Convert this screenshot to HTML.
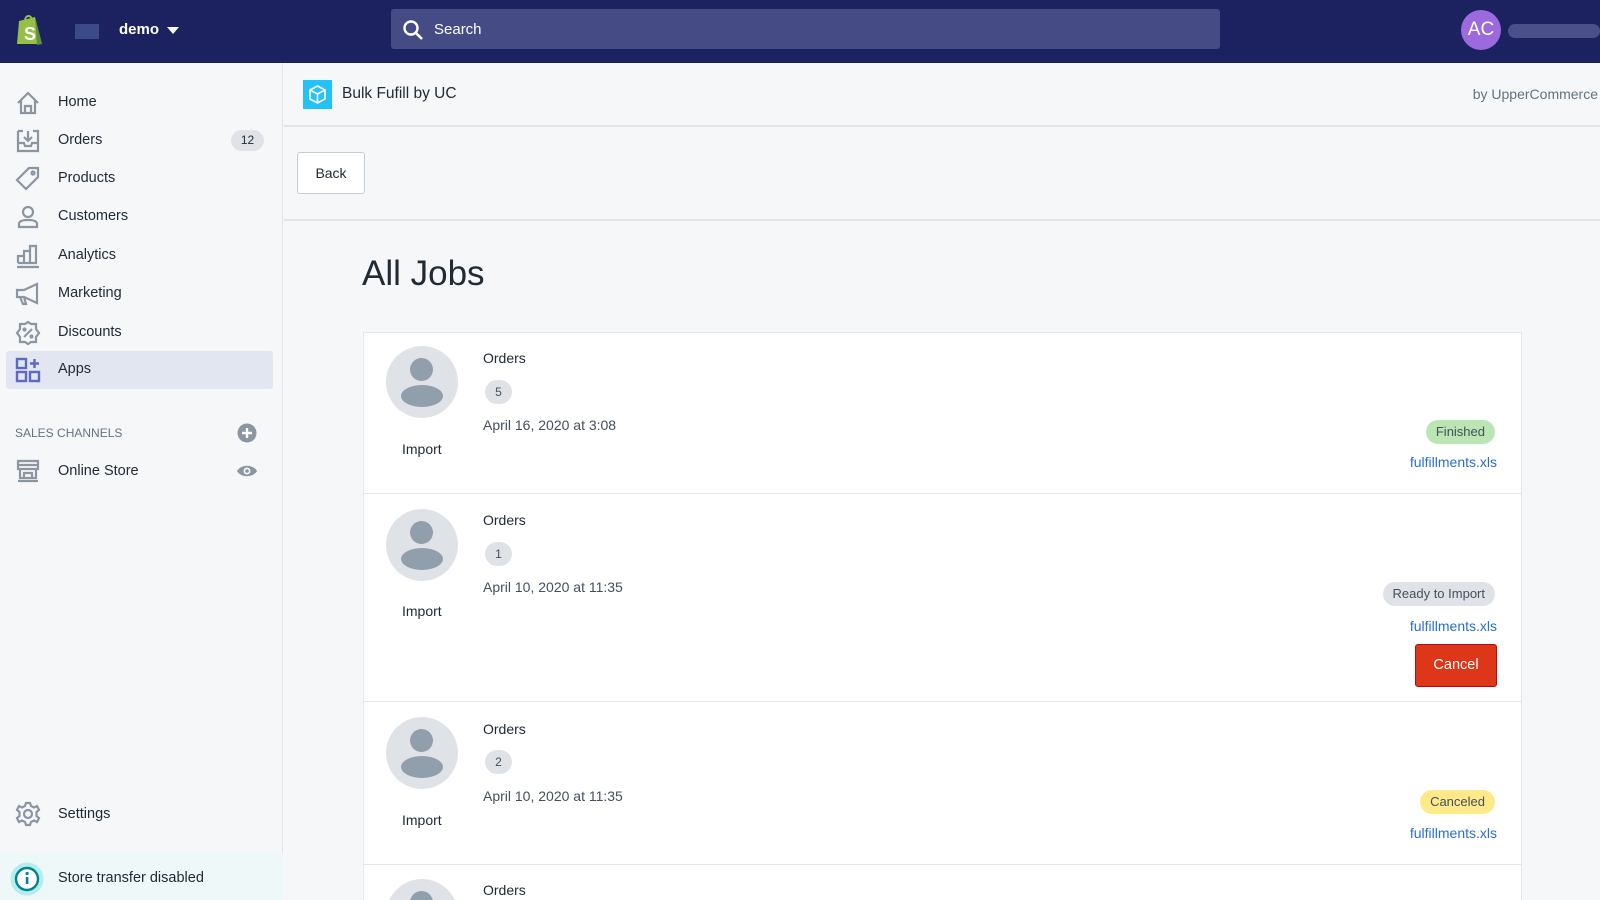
<!DOCTYPE html>
<html style="width:1600px;height:900px;overflow:hidden"><head><meta charset="utf-8"><style>
*{box-sizing:border-box;margin:0;padding:0}
body{width:1600px;height:900px;overflow:hidden;background:#f6f7f9;font-family:"Liberation Sans",sans-serif;color:#212b36;position:relative;font-size:14px}
.top{position:absolute;left:0;top:0;width:1600px;height:63px;background:#1c2260}
.abs{position:absolute}
.side{position:absolute;left:0;top:63px;width:283px;height:837px;background:#f6f7f9;border-right:1px solid #dfe3e8}
.nav{position:absolute;left:58px;font-size:14.5px;color:#212b36;transform:translateY(-50%)}
.card{position:absolute;left:363px;width:1159px;background:#fff;border:1px solid #e3e6ea;border-top:none}
.av{position:absolute;left:386px;width:72px;height:72px;border-radius:50%;background:#dfe3e8;overflow:hidden}
.t{position:absolute;transform:translateY(-50%);white-space:nowrap}
.badge{position:absolute;width:27px;height:24px;border-radius:12px;background:#dfe3e8;font-size:12px;text-align:center;line-height:24px;transform:translateY(-50%);color:#454f5b}
.pill{position:absolute;right:105px;height:24px;border-radius:12px;padding:0 10px;font-size:13px;line-height:24px;transform:translateY(-50%);color:#454f5b}
.link{position:absolute;right:103px;color:#2c6ecb;font-size:14px;transform:translateY(-50%)}
</style></head><body>
<div class="top">
  <svg class="abs" style="left:15px;top:13px" width="30" height="34" viewBox="0 0 30 34"><path d="M4 8 L20 4 L27 31 L2 31 Z" fill="#95bf47"/><path d="M20 4 L27 31 L22 32 Z" fill="#5e8e3e"/><path d="M10 8 C10 2 16 1 17 7" stroke="#95bf47" stroke-width="2" fill="none"/><text x="9" y="27" font-family="Liberation Sans" font-weight="bold" font-size="18" fill="#fff">S</text></svg>
  <div class="abs" style="left:75px;top:24px;width:24px;height:15px;background:#3d4a8a"></div>
  <div class="abs" style="left:119px;top:21px;color:#fff;font-weight:bold;font-size:15px">demo</div>
  <svg class="abs" style="left:167px;top:27px" width="12" height="8"><path d="M0 0H12L6 7Z" fill="#fff"/></svg>
  <div class="abs" style="left:391px;top:9px;width:829px;height:40px;background:#444b85;border-radius:3px"></div>
  <svg class="abs" style="left:402px;top:19px" width="22" height="22" viewBox="0 0 22 22"><circle cx="9" cy="9" r="6.5" stroke="#fff" stroke-width="2.4" fill="none"/><path d="M14 14L20 20" stroke="#fff" stroke-width="2.6"/></svg>
  <div class="abs" style="left:434px;top:21px;color:#fff;font-size:15px">Search</div>
  <div class="abs" style="left:1461px;top:10px;width:40px;height:40px;border-radius:50%;background:#9c6ade;color:#fff;font-size:19px;text-align:center;line-height:40px">AC</div>
  <div class="abs" style="left:1508px;top:24px;width:92px;height:14px;border-radius:7px;background:#4a5089"></div>
</div>
<div class="side">
  <div class="abs" style="left:6px;top:288px;width:267px;height:38px;background:#e2e6f1;border-radius:3px"></div>
  <div class="abs" style="left:0;top:790px;width:283px;height:47px;background:#eef8f8"></div>
</div>
<svg class="abs" style="left:15px;top:90px" width="26" height="26" viewBox="0 0 26 26" fill="none" stroke="#8c96a3" stroke-width="2.2"><path d="M3 13L13 3L23 13M6 10V23H20V10M10 23V16H16V23"/></svg>
<svg class="abs" style="left:15px;top:128px" width="26" height="26" viewBox="0 0 26 26" fill="none" stroke="#8c96a3" stroke-width="2.2"><path d="M3 3H8M18 3H23V23H3V3M3 15H9L10 18H16L17 15H23M13 3V12M9 9L13 13L17 9"/></svg>
<svg class="abs" style="left:15px;top:166px" width="26" height="26" viewBox="0 0 26 26" fill="none" stroke="#8c96a3" stroke-width="2.2"><path d="M14 2H23V11L11 23L2 14Z"/><circle cx="18" cy="7" r="1.5"/></svg>
<svg class="abs" style="left:15px;top:204px" width="26" height="26" viewBox="0 0 26 26" fill="none" stroke="#8c96a3" stroke-width="2.2"><circle cx="13" cy="8" r="5"/><path d="M4 23V20C4 17 8 16 13 16S22 17 22 20V23Z"/></svg>
<svg class="abs" style="left:15px;top:243px" width="26" height="26" viewBox="0 0 26 26" fill="none" stroke="#8c96a3" stroke-width="2.2"><path d="M2 24H24M3 20V13H9V20M9 20V8H15V20M15 20V3H21V20H3"/></svg>
<svg class="abs" style="left:15px;top:281px" width="26" height="26" viewBox="0 0 26 26" fill="none" stroke="#8c96a3" stroke-width="2.2"><path d="M2 9H9L22 3V22L9 16H2ZM5 16L8 23H11L9 16"/></svg>
<svg class="abs" style="left:15px;top:320px" width="26" height="26" viewBox="0 0 26 26" fill="none" stroke="#8c96a3" stroke-width="2.2"><path d="M13 2L16 4H21V9L24 13L21 17V22H16L13 24L10 22H5V17L2 13L5 9V4H10Z"/><path d="M9 17L17 9" /><circle cx="9.5" cy="9.5" r="1"/><circle cx="16.5" cy="16.5" r="1"/></svg>
<svg class="abs" style="left:15px;top:357px" width="26" height="26" viewBox="0 0 26 26" fill="none" stroke="#5c6ac4" stroke-width="2.4"><rect x="2" y="2" width="9" height="9"/><rect x="2" y="15" width="9" height="9"/><rect x="15" y="15" width="9" height="9"/><path d="M19.5 2V11M15 6.5H24"/></svg>
<div class="nav" style="top:102px">Home</div>
<div class="nav" style="top:140px">Orders</div>
<div class="abs" style="left:231px;top:130px;width:33px;height:21px;border-radius:11px;background:#dfe3e8;font-size:12px;text-align:center;line-height:21px">12</div>
<div class="nav" style="top:178px">Products</div>
<div class="nav" style="top:216px">Customers</div>
<div class="nav" style="top:255px">Analytics</div>
<div class="nav" style="top:293px">Marketing</div>
<div class="nav" style="top:332px">Discounts</div>
<div class="nav" style="top:369px">Apps</div>
<div class="abs" style="left:15px;top:426px;font-size:12px;color:#637381">SALES CHANNELS</div>
<svg class="abs" style="left:237px;top:423px" width="20" height="20" viewBox="0 0 20 20"><circle cx="10" cy="10" r="9.5" fill="#8c96a3"/><path d="M10 5V15M5 10H15" stroke="#fff" stroke-width="2.4"/></svg>
<svg class="abs" style="left:15px;top:458px" width="26" height="26" viewBox="0 0 26 26" fill="none" stroke="#8c96a3" stroke-width="2.2"><path d="M3 3H23V11H3ZM5 11V20H21V11M9 20V15H17V20M3 23H23M3 7H23"/></svg>
<div class="nav" style="top:471px">Online Store</div>
<svg class="abs" style="left:236px;top:464px" width="22" height="14" viewBox="0 0 22 14"><path d="M1 7C5 0 17 0 21 7C17 14 5 14 1 7Z" fill="#8c96a3"/><circle cx="11" cy="7" r="3.5" fill="#f6f7f9"/><circle cx="11" cy="7" r="1.8" fill="#8c96a3"/></svg>
<svg class="abs" style="left:15px;top:801px" width="26" height="26" viewBox="0 0 26 26" fill="none" stroke="#8c96a3" stroke-width="2.2"><circle cx="13" cy="13" r="4"/><path d="M11 2H15L16 5L19 6.5L22 5L24 9L21.5 11V15L24 17L22 21L19 19.5L16 21L15 24H11L10 21L7 19.5L4 21L2 17L4.5 15V11L2 9L4 5L7 6.5L10 5Z"/></svg>
<div class="nav" style="top:814px">Settings</div>
<svg class="abs" style="left:10px;top:862px" width="34" height="34" viewBox="0 0 34 34"><circle cx="17" cy="17" r="16.5" fill="#b7ecec"/><circle cx="17" cy="17" r="11" fill="#fff" stroke="#00848e" stroke-width="2.4"/><rect x="15.8" y="15" width="2.6" height="7" fill="#00848e"/><circle cx="17.1" cy="11.5" r="1.6" fill="#00848e"/></svg>
<div class="abs" style="left:58px;top:870px;font-size:14.5px;line-height:17px;height:17px">Store transfer disabled</div>

<div class="abs" style="left:284px;top:63px;width:1316px;height:64px;background:#f6f7f9;border-bottom:2px solid #e1e4e8"></div>
<div class="abs" style="left:303px;top:80px;width:29px;height:29px;background:#25c3f5"></div>
<svg class="abs" style="left:303px;top:80px" width="29" height="29" viewBox="0 0 29 29" fill="none" stroke="#fff" stroke-width="1.6"><path d="M14.5 6L22 10V19L14.5 23L7 19V10ZM7 10L14.5 14L22 10M14.5 14V23"/></svg>
<div class="t" style="left:342px;top:94px;font-size:15.5px;color:#212b36">Bulk Fufill by UC</div>
<div class="t" style="right:2px;top:94px;font-size:14px;color:#637381">by UpperCommerce</div>
<div class="abs" style="left:297px;top:152px;width:68px;height:42px;background:#fff;border:1px solid #c4cdd5;border-radius:3px;text-align:center;line-height:40px;font-size:14px">Back</div>
<div class="abs" style="left:284px;top:219px;width:1316px;height:2px;background:#e1e4e8"></div>
<div class="t" style="left:362px;top:274px;font-size:35px;color:#212b36">All Jobs</div>

<div class="card" style="top:332px;height:162px;border-top:1px solid #e3e6ea"></div>
<div class="card" style="top:494px;height:208px"></div>
<div class="card" style="top:702px;height:163px"></div>
<div class="card" style="top:865px;height:35px;border-bottom:none"></div>

<div class="av" style="top:346px"><div class="abs" style="left:24px;top:12px;width:23px;height:23px;border-radius:50%;background:#919eab"></div><div class="abs" style="left:15px;top:39px;width:42px;height:22px;border-radius:50%;background:#919eab"></div></div>
<div class="t" style="left:483px;top:358px">Orders</div>
<div class="badge" style="left:485px;top:392px">5</div>
<div class="t" style="left:483px;top:425px;color:#454f5b">April 16, 2020 at 3:08</div>
<div class="t" style="left:402px;top:449px">Import</div>
<div class="pill" style="top:432px;background:#bbe5b3">Finished</div>
<div class="link" style="top:462px">fulfillments.xls</div>

<div class="av" style="top:509px"><div class="abs" style="left:24px;top:12px;width:23px;height:23px;border-radius:50%;background:#919eab"></div><div class="abs" style="left:15px;top:39px;width:42px;height:22px;border-radius:50%;background:#919eab"></div></div>
<div class="t" style="left:483px;top:520px">Orders</div>
<div class="badge" style="left:485px;top:554px">1</div>
<div class="t" style="left:483px;top:587px;color:#454f5b">April 10, 2020 at 11:35</div>
<div class="t" style="left:402px;top:611px">Import</div>
<div class="pill" style="top:594px;background:#dfe3e8">Ready to Import</div>
<div class="link" style="top:626px">fulfillments.xls</div>
<div class="abs" style="left:1415px;top:644px;width:82px;height:43px;background:#de3618;border:1px solid #bf0711;border-radius:3px;color:#fff;font-size:14.5px;text-align:center;line-height:41px">Cancel</div>

<div class="av" style="top:717px"><div class="abs" style="left:24px;top:12px;width:23px;height:23px;border-radius:50%;background:#919eab"></div><div class="abs" style="left:15px;top:39px;width:42px;height:22px;border-radius:50%;background:#919eab"></div></div>
<div class="t" style="left:483px;top:729px">Orders</div>
<div class="badge" style="left:485px;top:762px">2</div>
<div class="t" style="left:483px;top:796px;color:#454f5b">April 10, 2020 at 11:35</div>
<div class="t" style="left:402px;top:820px">Import</div>
<div class="pill" style="top:802px;background:#ffea8a">Canceled</div>
<div class="link" style="top:833px">fulfillments.xls</div>

<div class="abs" style="left:386px;top:879px;width:72px;height:21px;overflow:hidden">
<div style="position:absolute;left:0;top:0;width:72px;height:72px;border-radius:50%;background:#dfe3e8"></div>
<div class="abs" style="left:24px;top:12px;width:23px;height:23px;border-radius:50%;background:#919eab"></div>
</div>
<div class="abs" style="left:483px;top:882px;line-height:16px;height:16px">Orders</div>
</body></html>
